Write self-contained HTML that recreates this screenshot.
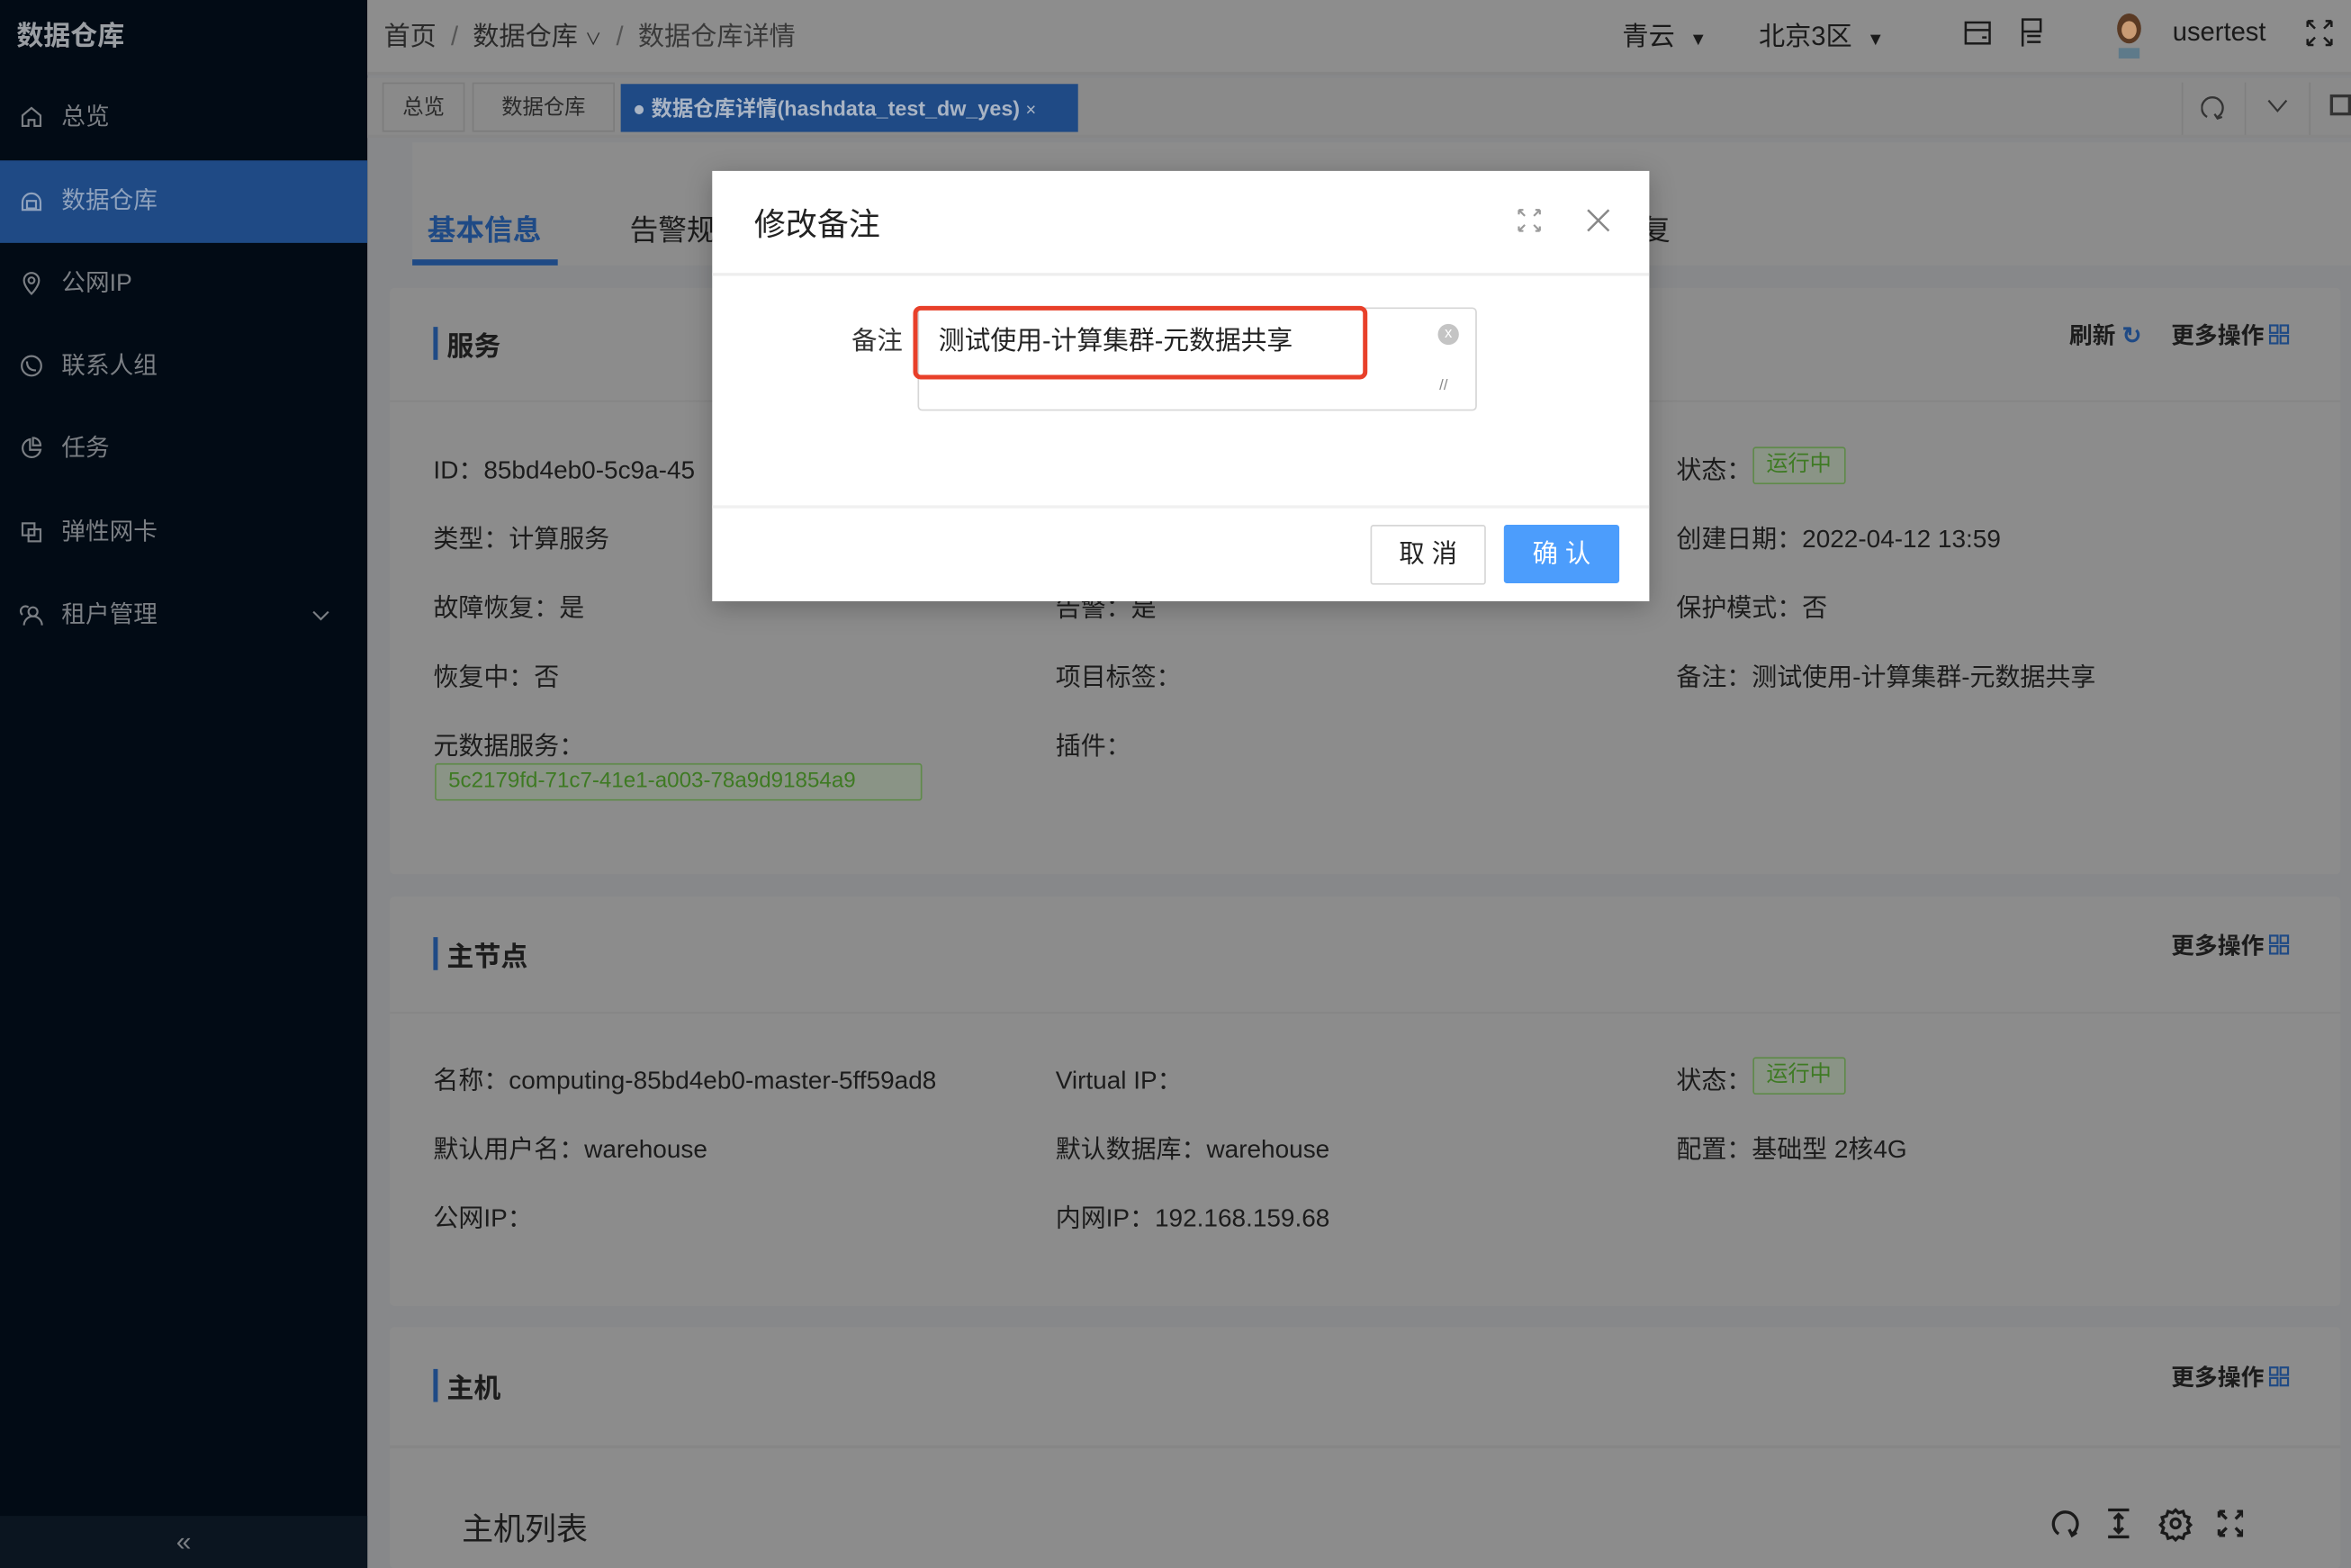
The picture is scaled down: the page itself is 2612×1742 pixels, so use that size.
<!DOCTYPE html>
<html><head><meta charset="utf-8"><style>
*{margin:0;padding:0;box-sizing:border-box}
html,body{width:2612px;height:1742px;overflow:hidden;background:#87888a}
#w{position:absolute;left:0;top:0;width:1568px;height:1046px;transform:scale(1.66582);transform-origin:0 0;font-family:"Liberation Sans","Noto Sans CJK SC",sans-serif;color:#1c1c1c;background:#87888a}
.a{position:absolute;white-space:nowrap}
.side{left:0;top:0;width:245px;height:1046px;background:#020b15}
.mi{position:absolute;left:0;width:245px;height:55px;color:#7b7f84;font-size:16px;line-height:55px;padding-left:41px}
.mi svg{position:absolute;left:13px;top:19px}
.card{position:absolute;left:260px;width:1301px;background:#8c8c8c;border-radius:3px}
.t{font-size:16.8px}
.h{font-size:18px;font-weight:bold}
.bar{position:absolute;width:3px;height:22px;background:#1f4a85}
.tag{position:absolute;border:1px solid #5f8a4a;background:#8a9486;color:#3e7a23;font-size:14.5px;border-radius:2px;height:25px;line-height:23px;padding:0 8px}
.g{display:inline-block;vertical-align:-1px;margin-left:3px}
</style></head><body><div id="w">
<div class="a side"></div>
<div class="a" style="left:11px;top:10px;font-size:18px;color:#9a9ea3;font-weight:bold">数据仓库</div>
<div class="mi" style="top:51px"><svg width="16" height="16" viewBox="0 0 16 16" fill="none" stroke="#7b7f84" stroke-width="1.3"><path d="M2 7L8 2l6 5v7H10v-4H6v4H2z"/></svg>总览</div>
<div class="mi" style="top:107px;background:#1f4a85;color:#8fa2bd"><svg width="16" height="16" viewBox="0 0 16 16" fill="none" stroke="#8fa2bd" stroke-width="1.3"><path d="M2 9a6 6 0 0 1 12 0v5H2z"/><rect x="5" y="8" width="6" height="5"/></svg>数据仓库</div>
<div class="mi" style="top:162px"><svg width="16" height="16" viewBox="0 0 16 16" fill="none" stroke="#7b7f84" stroke-width="1.3"><path d="M8 15s5-5 5-9A5 5 0 0 0 3 6c0 4 5 9 5 9z"/><circle cx="8" cy="6" r="2"/></svg>公网IP</div>
<div class="mi" style="top:217px"><svg width="16" height="16" viewBox="0 0 16 16" fill="none" stroke="#7b7f84" stroke-width="1.3"><circle cx="8" cy="8" r="6.5"/><path d="M5 5c0 4 2 6 6 6"/></svg>联系人组</div>
<div class="mi" style="top:272px"><svg width="16" height="16" viewBox="0 0 16 16" fill="none" stroke="#7b7f84" stroke-width="1.3"><path d="M7 2a6 6 0 1 0 7 7H7z"/><path d="M9 1v5h5a5 5 0 0 0-5-5z"/></svg>任务</div>
<div class="mi" style="top:328px"><svg width="16" height="16" viewBox="0 0 16 16" fill="none" stroke="#7b7f84" stroke-width="1.3"><rect x="2" y="2" width="8" height="8"/><rect x="6" y="6" width="8" height="8"/></svg>弹性网卡</div>
<div class="mi" style="top:383px"><svg width="16" height="16" viewBox="0 0 16 16" fill="none" stroke="#7b7f84" stroke-width="1.3"><circle cx="9" cy="6" r="3"/><path d="M3 15a6 6 0 0 1 12 0"/><path d="M6 3a3 3 0 0 0-4 5"/></svg>租户管理<svg style="left:208px;top:24px" width="12" height="8" viewBox="0 0 12 8" fill="none" stroke="#7b7f84" stroke-width="1.3"><path d="M1 1l5 5 5-5"/></svg></div>
<div class="a" style="left:0;top:1011px;width:245px;height:35px;background:#0b1520;color:#7b7f84;text-align:center;line-height:35px;font-size:18px">«</div>

<!-- header -->
<div class="a" style="left:245px;top:0;width:1323px;height:50px;background:#8d8d8d;border-bottom:2px solid #858585"></div>
<div class="a" style="left:256px;top:11px;color:#2a2a2a;font-size:17.5px">首页 <span style="color:#555">&nbsp;/&nbsp;</span> 数据仓库 <span style="font-size:11px">∨</span> <span style="color:#555">&nbsp;/&nbsp;</span> <span style="color:#3a3a3a">数据仓库详情</span></div>
<div class="a" style="left:1082px;top:11px;color:#1a1a1a;font-size:17.5px">青云 &nbsp;<span style="font-size:12px">▼</span></div>
<div class="a" style="left:1173px;top:11px;color:#1a1a1a;font-size:17.5px">北京3区 &nbsp;<span style="font-size:12px">▼</span></div>
<svg class="a" style="left:1310px;top:14px" width="18" height="16" viewBox="0 0 18 16" fill="none" stroke="#1a1a1a" stroke-width="1.5"><rect x="1" y="1" width="16" height="14"/><path d="M1 6h16M12 11h3"/></svg>
<svg class="a" style="left:1347px;top:12px" width="16" height="20" viewBox="0 0 16 20" fill="none" stroke="#1a1a1a" stroke-width="1.5"><path d="M2 1h12v8H2zM2 1v18M5 12h9M5 16h9"/></svg>
<svg class="a" style="left:1408px;top:8px" width="24" height="32" viewBox="0 0 24 32"><ellipse cx="12" cy="11" rx="8" ry="10" fill="#5a3a24"/><ellipse cx="12" cy="12" rx="5" ry="6" fill="#c99b74"/><rect x="5" y="24" width="14" height="7" fill="#5e7a8a"/></svg>
<div class="a" style="left:1449px;top:11px;font-size:17.5px;color:#1a1a1a">usertest</div>
<svg class="a" style="left:1538px;top:13px" width="18" height="18" viewBox="0 0 18 18" fill="none" stroke="#1a1a1a" stroke-width="1.5"><path d="M1 1l5 5M1 1v4M1 1h4M17 1l-5 5M17 1v4M17 1h-4M1 17l5-5M1 17v-4M1 17h4M17 17l-5-5M17 17v-4M17 17h-4"/></svg>

<!-- tab bar -->
<div class="a" style="left:245px;top:52px;width:1323px;height:40px;background:#8a8a8a;border-bottom:2px solid #868686"></div>
<div class="a" style="left:255px;top:55px;width:55px;height:33px;border:1px solid #7c7c7c;font-size:14px;line-height:31px;text-align:center;color:#2a2a2a">总览</div>
<div class="a" style="left:315px;top:55px;width:95px;height:33px;border:1px solid #7c7c7c;font-size:14px;line-height:31px;text-align:center;color:#2a2a2a">数据仓库</div>
<div class="a" style="left:414px;top:56px;width:305px;height:32px;background:#1f4a85;font-size:14px;font-weight:bold;line-height:32px;color:#a9b4c4;padding-left:8px">● 数据仓库详情(hashdata_test_dw_yes) <span style="font-size:12px;font-weight:normal">×</span></div>
<div class="a" style="left:1455px;top:55px;width:1px;height:35px;background:#7f7f7f"></div>
<div class="a" style="left:1497px;top:55px;width:1px;height:35px;background:#7f7f7f"></div>
<div class="a" style="left:1540px;top:55px;width:1px;height:35px;background:#7f7f7f"></div>
<svg class="a" style="left:1468px;top:63px" width="16" height="18" viewBox="0 0 16 18" fill="none" stroke="#333" stroke-width="1.4"><path d="M4 15A7 7 0 1 1 11 15"/><path d="M9 13l2 3 3-1"/></svg>
<svg class="a" style="left:1512px;top:66px" width="14" height="10" viewBox="0 0 14 10" fill="none" stroke="#333" stroke-width="1.3"><path d="M1 1l6 7 6-7"/></svg>
<div class="a" style="left:1554px;top:63px;width:14px;height:14px;border:2px solid #333"></div>

<!-- tabs -->
<div class="a" style="left:275px;top:95px;width:1293px;height:82px;background:#8c8c8c"></div>
<div class="a" style="left:285px;top:139px;font-size:19px;color:#1f4a85;font-weight:bold">基本信息</div>
<div class="a" style="left:275px;top:173px;width:97px;height:4px;background:#1f4a85"></div>
<div class="a" style="left:420px;top:139px;font-size:19px;color:#1a1a1a">告警规</div>
<div class="a" style="left:1095px;top:139px;font-size:19px;color:#1a1a1a">复</div>

<!-- card 1 -->
<div class="card" style="top:192px;height:391px"></div>
<div class="a" style="left:260px;top:267px;width:1301px;height:1px;background:#858585"></div>
<div class="bar" style="left:289px;top:218px"></div>
<div class="a h" style="left:298px;top:217px">服务</div>
<div class="a" style="left:1380px;top:212px;font-size:15.5px;font-weight:bold">刷新 <span style="color:#1f4a85">↻</span></div>
<div class="a" style="left:1448px;top:212px;font-size:15.5px;font-weight:bold">更多操作<svg class="g" width="14" height="14" viewBox="0 0 14 14" fill="none" stroke="#1f4a85" stroke-width="1.3"><rect x="1" y="1" width="5" height="5"/><rect x="8" y="1" width="5" height="5"/><rect x="1" y="8" width="5" height="5"/><rect x="8" y="8" width="5" height="5"/></svg></div>
<div class="a t" style="left:289px;top:300px">ID：85bd4eb0-5c9a-45</div>
<div class="a t" style="left:289px;top:346px">类型：计算服务</div>
<div class="a t" style="left:289px;top:392px">故障恢复：是</div>
<div class="a t" style="left:289px;top:438px">恢复中：否</div>
<div class="a t" style="left:289px;top:484px">元数据服务：</div>
<div class="tag" style="left:290px;top:509px;width:325px">5c2179fd-71c7-41e1-a003-78a9d91854a9</div>
<div class="a t" style="left:704px;top:392px">告警：是</div>
<div class="a t" style="left:704px;top:438px">项目标签：</div>
<div class="a t" style="left:704px;top:484px">插件：</div>
<div class="a t" style="left:1118px;top:300px">状态：</div>
<div class="tag" style="left:1169px;top:298px">运行中</div>
<div class="a t" style="left:1118px;top:346px">创建日期：2022-04-12 13:59</div>
<div class="a t" style="left:1118px;top:392px">保护模式：否</div>
<div class="a t" style="left:1118px;top:438px">备注：测试使用-计算集群-元数据共享</div>

<!-- card 2 -->
<div class="card" style="top:598px;height:273px"></div>
<div class="a" style="left:260px;top:675px;width:1301px;height:1px;background:#858585"></div>
<div class="bar" style="left:289px;top:625px"></div>
<div class="a h" style="left:298px;top:624px">主节点</div>
<div class="a" style="left:1448px;top:619px;font-size:15.5px;font-weight:bold">更多操作<svg class="g" width="14" height="14" viewBox="0 0 14 14" fill="none" stroke="#1f4a85" stroke-width="1.3"><rect x="1" y="1" width="5" height="5"/><rect x="8" y="1" width="5" height="5"/><rect x="1" y="8" width="5" height="5"/><rect x="8" y="8" width="5" height="5"/></svg></div>
<div class="a t" style="left:289px;top:707px">名称：computing-85bd4eb0-master-5ff59ad8</div>
<div class="a t" style="left:289px;top:753px">默认用户名：warehouse</div>
<div class="a t" style="left:289px;top:799px">公网IP：</div>
<div class="a t" style="left:704px;top:707px">Virtual IP：</div>
<div class="a t" style="left:704px;top:753px">默认数据库：warehouse</div>
<div class="a t" style="left:704px;top:799px">内网IP：192.168.159.68</div>
<div class="a t" style="left:1118px;top:707px">状态：</div>
<div class="tag" style="left:1169px;top:705px">运行中</div>
<div class="a t" style="left:1118px;top:753px">配置：基础型 2核4G</div>

<!-- card 3 -->
<div class="card" style="top:885px;height:161px"></div>
<div class="a" style="left:260px;top:964px;width:1301px;height:2px;background:#868686"></div>
<div class="bar" style="left:289px;top:913px"></div>
<div class="a h" style="left:298px;top:912px">主机</div>
<div class="a" style="left:1448px;top:907px;font-size:15.5px;font-weight:bold">更多操作<svg class="g" width="14" height="14" viewBox="0 0 14 14" fill="none" stroke="#1f4a85" stroke-width="1.3"><rect x="1" y="1" width="5" height="5"/><rect x="8" y="1" width="5" height="5"/><rect x="1" y="8" width="5" height="5"/><rect x="8" y="8" width="5" height="5"/></svg></div>
<div class="a" style="left:308px;top:1004px;font-size:21px">主机列表</div>
<svg class="a" style="left:1366px;top:1003px" width="130" height="26" viewBox="0 0 130 26" fill="none" stroke="#1a1a1a" stroke-width="2"><path d="M7 20a8 8 0 1 1 9 0"/><path d="M14 17l2 4 3-2"/><path d="M40 4h14M40 22h14M47 7v12M44 10l3-3 3 3M44 16l3 3 3-3"/><circle cx="85" cy="13" r="3"/><path d="M85 4l2 2 3-1 1 3 3 1-1 3 2 2-2 2 1 3-3 1-1 3-3-1-2 2-2-2-3 1-1-3-3-1 1-3-2-2 2-2-1-3 3-1 1-3 3 1z"/><path d="M114 5l5 5M114 5v4M114 5h4M130 5l-5 5M126 5h4M130 5v4M114 21l5-5M114 21v-4M114 21h4M130 21l-5-5M130 21h-4M130 21v-4"/></svg>

<!-- modal -->
<div class="a" style="left:475px;top:114px;width:625px;height:287px;background:#fff;box-shadow:0 4px 16px rgba(0,0,0,.25)"></div>
<div class="a" style="left:503px;top:134px;font-size:21px;color:#222">修改备注</div>
<svg class="a" style="left:1012px;top:139px" width="16" height="16" viewBox="0 0 16 16" fill="none" stroke="#999" stroke-width="1.3"><path d="M1 1l4 4M1 1v3M1 1h3M15 1l-4 4M15 1v3M15 1h-3M1 15l4-4M1 15v-3M1 15h3M15 15l-4-4M15 15v-3M15 15h-3"/></svg>
<svg class="a" style="left:1058px;top:139px" width="16" height="16" viewBox="0 0 16 16" stroke="#888" stroke-width="1.5"><path d="M1 1l14 14M15 1L1 15"/></svg>
<div class="a" style="left:475px;top:182px;width:625px;height:2px;background:#eee"></div>
<div class="a" style="left:568px;top:213px;font-size:17px;color:#333">备注</div>
<div class="a" style="left:612px;top:205px;width:373px;height:69px;border:1px solid #d6d6d6;border-radius:3px"></div>
<div class="a" style="left:959px;top:216px;width:14px;height:14px;border-radius:50%;background:#c4c4c4;color:#fff;font-size:10px;line-height:14px;text-align:center">x</div>
<div class="a" style="left:960px;top:252px;font-size:10px;color:#888">//</div>
<div class="a" style="left:609px;top:204px;width:303px;height:49px;border:3px solid #e8402a;border-radius:5px"></div>
<div class="a" style="left:626px;top:213px;font-size:17.3px;color:#222">测试使用-计算集群-元数据共享</div>
<div class="a" style="left:475px;top:337px;width:625px;height:2px;background:#f0f0f0"></div>
<div class="a" style="left:914px;top:350px;width:77px;height:40px;border:1px solid #d6d6d6;border-radius:2px;font-size:17px;line-height:38px;text-align:center;color:#222">取 消</div>
<div class="a" style="left:1003px;top:350px;width:77px;height:39px;background:#4c9dfc;border-radius:2px;font-size:17px;line-height:39px;text-align:center;color:#fff">确 认</div>
</div></body></html>
